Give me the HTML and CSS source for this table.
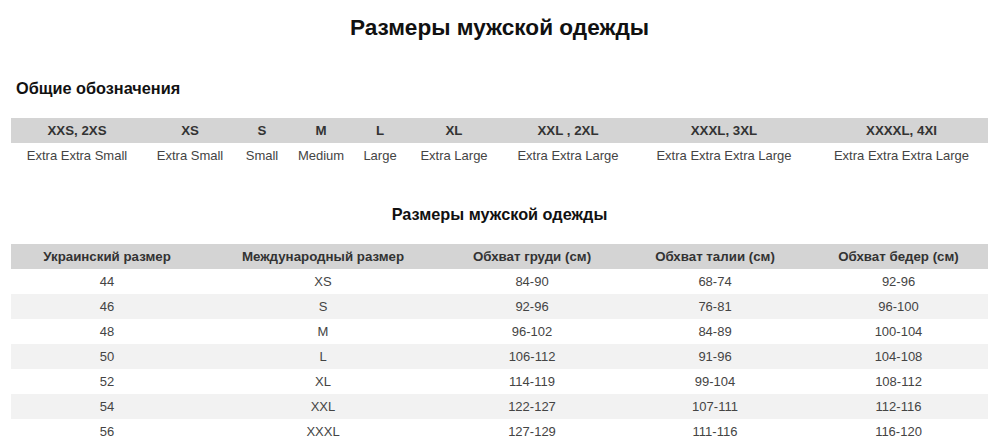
FILE: index.html
```html
<!DOCTYPE html>
<html lang="ru">
<head>
<meta charset="utf-8">
<title>Размеры мужской одежды</title>
<link rel="stylesheet" href="styles.css">
</head>
<body>
<h1 class="title">Размеры мужской одежды</h1>
<h2 class="subtitle">Общие обозначения</h2>
<table class="grid legend">
  <colgroup>
    <col class="l1"><col class="l2"><col class="l3"><col class="l4"><col class="l5"><col class="l6"><col class="l7"><col class="l8"><col class="l9">
  </colgroup>
  <thead>
    <tr><th>XXS, 2XS</th><th>XS</th><th>S</th><th>M</th><th>L</th><th>XL</th><th>XXL , 2XL</th><th>XXXL, 3XL</th><th>XXXXL, 4XI</th></tr>
  </thead>
  <tbody>
    <tr><td>Extra Extra Small</td><td>Extra Small</td><td>Small</td><td>Medium</td><td>Large</td><td>Extra Large</td><td>Extra Extra Large</td><td>Extra Extra Extra Large</td><td>Extra Extra Extra Large</td></tr>
  </tbody>
</table>
<h2 class="section">Размеры мужской одежды</h2>
<table class="grid sizes">
  <colgroup>
    <col class="s1"><col class="s2"><col class="s3"><col class="s4"><col class="s5">
  </colgroup>
  <thead>
    <tr><th>Украинский размер</th><th>Международный размер</th><th>Обхват груди (см)</th><th>Обхват талии (см)</th><th>Обхват бедер (см)</th></tr>
  </thead>
  <tbody>
    <tr><td>44</td><td>XS</td><td>84-90</td><td>68-74</td><td>92-96</td></tr>
    <tr><td>46</td><td>S</td><td>92-96</td><td>76-81</td><td>96-100</td></tr>
    <tr><td>48</td><td>M</td><td>96-102</td><td>84-89</td><td>100-104</td></tr>
    <tr><td>50</td><td>L</td><td>106-112</td><td>91-96</td><td>104-108</td></tr>
    <tr><td>52</td><td>XL</td><td>114-119</td><td>99-104</td><td>108-112</td></tr>
    <tr><td>54</td><td>XXL</td><td>122-127</td><td>107-111</td><td>112-116</td></tr>
    <tr><td>56</td><td>XXXL</td><td>127-129</td><td>111-116</td><td>116-120</td></tr>
  </tbody>
</table>
</body>
</html>
```

FILE: styles.css
```css
html, body {
  margin: 0;
  padding: 0;
  background: #ffffff;
}
body {
  padding: 0 10px 0 11px;
  font-family: "Liberation Sans", Arial, sans-serif;
  color: #444;
  overflow: hidden;
}
.title {
  margin: 15px 0 0;
  font-size: 22.6px;
  line-height: 26px;
  font-weight: bold;
  text-align: center;
  color: #111;
}
.subtitle {
  margin: 37px 0 0;
  padding-left: 5px;
  font-size: 16.3px;
  line-height: 20px;
  font-weight: bold;
  color: #111;
}
.section {
  margin: 36px 0 0;
  font-size: 16.3px;
  line-height: 20px;
  font-weight: bold;
  text-align: center;
  color: #111;
}
.grid {
  width: 977px;
  table-layout: fixed;
  border-collapse: collapse;
  border-spacing: 0;
}
.legend { margin-top: 20px; }
.sizes { margin-top: 20px; }
.grid th, .grid td {
  height: 25px;
  padding: 0;
  text-align: center;
  vertical-align: middle;
  font-size: 13px;
  line-height: 25px;
  white-space: nowrap;
}
.grid th {
  background: #d4d4d4;
  color: #333;
  font-size: 13.3px;
  font-weight: bold;
}
.grid td {
  color: #444;
}
.sizes tbody tr:nth-child(even) td {
  background: #f2f2f2;
}
.l1 { width: 132px; }
.l2 { width: 94px; }
.l3 { width: 50px; }
.l4 { width: 68px; }
.l5 { width: 50px; }
.l6 { width: 98px; }
.l7 { width: 130px; }
.l8 { width: 182px; }
.l9 { width: 173px; }
.s1 { width: 192px; }
.s2 { width: 240px; }
.s3 { width: 178px; }
.s4 { width: 188px; }
.s5 { width: 179px; }
```
